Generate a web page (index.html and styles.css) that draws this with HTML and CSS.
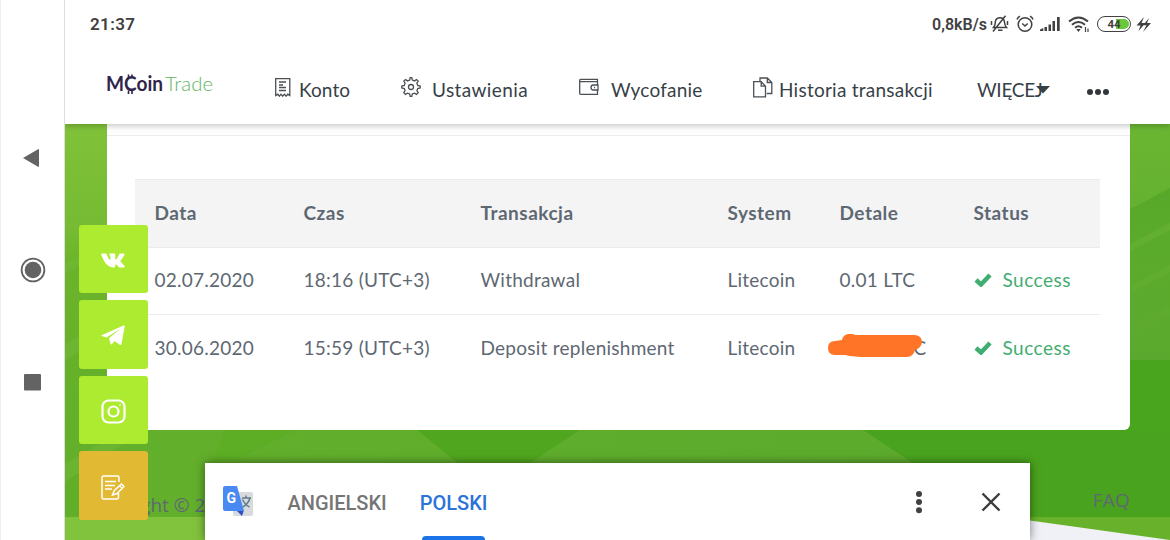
FILE: index.html
```
<!DOCTYPE html>
<html lang="pl">
  <head>
    <meta charset="UTF-8" />
    <title>MCoinTrade</title>
    <link rel="stylesheet" href="styles.css">
  </head>
  <body>
    <div class="system-nav">
      <svg class="back" width="17" height="20" viewBox="0 0 17 20"><path d="M0 10 15.500 1q.5 0 .5 1v16q0 1-.5 1z" /></svg>
      <svg class="home" width="26" height="26" viewBox="0 0 26 26"><circle class="ring" cx="13" cy="13" r="11.400" /><circle cx="13" cy="13" r="8.300" /></svg>
      <svg class="recent" width="17" height="17" viewBox="0 0 17 17"><rect width="17" height="16.500" rx="1" /></svg>
    </div>

    <div class="screen">
      <div class="status-bar">
        <span class="time">21:37</span>
        <div class="indicators">
          <span class="speed">0,8kB/s</span>
          <svg class="line" width="20" height="18" viewBox="0 0 20 18">
            <path d="M3.500 12.500c2-2 1.500-4 2-6.500.5-2 2-3.200 4.500-3.200 3 0 4.300 2 4.500 4.500.2 2.500.5 3.500 2 5.200zM8 15.300h4.500M3 16.500 15.500.8M1.500 6v4M17.500 6v4" />
          </svg>
          <svg class="line" width="18" height="18" viewBox="0 0 18 18">
            <circle cx="9" cy="9.500" r="6.800" /><path d="M1 4.500C1.500 3 2.500 2 4 1.200M17 4.500C16.500 3 15.500 2 14 1.200M6.300 8.500 9 11l2.700-2.500" />
          </svg>
          <svg class="signal" width="20" height="16" viewBox="0 0 20 16">
            <path d="M0 15v-1.500l3.300-1.500v3zM4.500 11h2.500v4H4.500zM8.500 8.500H11V15H8.500zM12.500 5H15v10h-2.500zM17 1h2.700v14H17z" />
          </svg>
          <svg class="wifi" width="22" height="17" viewBox="0 0 22 17">
            <path d="M1 5.500Q10.500-2.500 20 5.500M4 8.700q6.500-5.500 13 0M7 11.700q3.500-3 7 0" /><path class="fill" d="m8.300 13 4.400 0-2.200 3z" /><path class="thin" d="M17.500 11v5M20 12.500v3.500" />
          </svg>
          <div class="battery"><span>44</span></div>
          <svg class="bolt" width="15" height="15" viewBox="0 0 15 15"><path d="M8 0 .5 8.500h4L2.500 14l7-8h-4zM13 1 7 8.200h3.500L7 15l8-9h-4z" /></svg>
        </div>
      </div>

      <div class="navbar">
        <div class="logo">
          <svg width="114" height="34" viewBox="0 0 114 34">
            <text class="coin" x="0" y="22" textLength="57" lengthAdjust="spacingAndGlyphs">MCoin</text>
            <text class="trade" x="59" y="22" textLength="48" lengthAdjust="spacingAndGlyphs">Trade</text>
            <path d="M22.500 5.500v3.500M26 5.500v3.500M22.500 21.500v3.500M26 21.500v3.500" />
          </svg>
        </div>
        <a class="nav-item konto">
          <svg width="16" height="19" viewBox="0 0 16 19"><path d="M.7 17.500V.7h14.100v16.800l-2-1.300-1.700 2-1.700-2-1.700 2-1.700-2-1.700 2-1.500-2zM4 4h7M4 7h4M4 9.500h7M4 12.500h7" /></svg>
          <span>Konto</span>
        </a>
        <a class="nav-item settings">
          <svg width="20" height="20" viewBox="0 0 20 20"><circle cx="10" cy="10" r="2.500" /><path d="m8.700 3 .5-2.300h1.600l.5 2.300 2.200.9 2-1.400 1.700 1.700-1.300 2 .8 2.200 2.500.6v2l-2.500.5-.8 2.200 1.300 2-1.700 1.700-2-1.300-2.200.8-.5 2.500H9.200l-.5-2.500-2.200-.8-2 1.300-1.700-1.700 1.300-2-.8-2.200-2.500-.5V9l2.500-.6.8-2.200-1.300-2 1.700-1.700 2 1.400z" /></svg>
          <span>Ustawienia</span>
        </a>
        <a class="nav-item withdraw">
          <svg width="20" height="18" viewBox="0 0 20 18"><path d="M18.500 7V1.300H1.800Q.7 1.300.7 2.500v13q0 .8 1 .8h16.800v-4M1 3.700h17.300M19 7h-4.500q-2.500 0-2.500 2.500t2.500 2.500H19zM15 9.500h1" /></svg>
          <span>Wycofanie</span>
        </a>
        <a class="nav-item history">
          <svg width="20" height="21" viewBox="0 0 20 21"><path d="M.7 4.700h7.500l4.300 4.500v10.600H.7zM8.200 4.700v4.500h4.300M7 4V1h7.300l4.500 4.500v11h-5M14.300 1v4.500h4.500" /></svg>
          <span>Historia transakcji</span>
        </a>
        <a class="nav-item more">
          <span>WIĘCEJ</span>
          <svg class="caret" width="14" height="8" viewBox="0 0 14 8"><path d="M0 0h14L7 7.500z" /></svg>
        </a>
        <div class="dots"><i></i><i></i><i></i></div>
      </div>

      <div class="content">
        <svg class="backdrop" width="1105" height="416" viewBox="0 0 1105 416">
          <defs>
            <linearGradient id="left" x1="0" y1="0" x2="0" y2="1"><stop offset="0" stop-color="#80c23a" /><stop offset=".26" stop-color="#76bb33" /><stop offset=".36" stop-color="#6bb32a" /><stop offset="1" stop-color="#60ae29" /></linearGradient>
            <linearGradient id="right" x1="0" y1="0" x2="0" y2="1"><stop offset="0" stop-color="#6ab632" /><stop offset="1" stop-color="#5ba82e" /></linearGradient>
            <linearGradient id="bottom" x1="0" y1="0" x2="1" y2="0"><stop offset="0" stop-color="#63b02b" /><stop offset="1" stop-color="#5aa92e" /></linearGradient>
            <linearGradient id="fold" x1="0" y1="0" x2="0" y2="1"><stop offset="0" stop-color="#57a82a" /><stop offset="1" stop-color="#57a82a" stop-opacity="0" /></linearGradient>
          </defs>
          <rect width="1105" height="416" fill="url(#bottom)" />
          <rect width="60" height="393" fill="url(#left)" />
          <path d="M0 140 45 118v8L0 150zM0 220 45 196v14L0 236zM0 340 60 305v14L0 358z" fill="#74b93a" opacity=".5" />
          <path d="M160 306h72l-62 30h-22z" fill="#5aad1f" opacity=".6" />
          <path d="M352 306h163l-50 33h-72z" fill="#51a61f" />
          <path d="M798 306h307v87H930z" fill="#4aa31e" />
          <rect x="1060" width="45" height="240" fill="url(#right)" />
          <path d="M1060 88 1105 64v35l-45 24zM1060 130l45-24v35l-45 24zM1060 172l45-24v35l-45 24zM1060 214l45-24v35l-45 24z" fill="url(#fold)" />
          <path d="M1060 236h45v70h-45z" fill="#4aa51e" />
          <rect y="393" width="500" height="23" fill="#81c33d" />
          <rect x="900" y="393" width="205" height="23" fill="#67b22a" />
          <path d="M900 390 965 396.500 1105 416H900z" fill="#f0f1f7" />
        </svg>

        <div class="card">
          <div class="card-top"></div>
          <table class="transactions">
            <colgroup><col class="c-date"><col class="c-time"><col class="c-type"><col class="c-system"><col class="c-details"><col class="c-status"></colgroup>
            <thead>
              <tr><th>Data</th><th>Czas</th><th>Transakcja</th><th>System</th><th>Detale</th><th>Status</th></tr>
            </thead>
            <tbody>
              <tr>
                <td>02.07.2020</td><td>18:16 (UTC+3)</td><td>Withdrawal</td><td>Litecoin</td><td>0.01 LTC</td>
                <td class="success"><svg width="18" height="14" viewBox="0 0 18 14"><path d="m2 7 5 4.500L16 2" /></svg>Success</td>
              </tr>
              <tr>
                <td>30.06.2020</td><td>15:59 (UTC+3)</td><td>Deposit replenishment</td><td>Litecoin</td>
                <td class="hidden-amount"><span>C</span><svg width="96" height="24" viewBox="0 0 96 24"><path d="M7 7q-7 0-7 7t7 7h10q9 2 22 2h40q6 0 8-7 7-3 7-8 0-6-7-7l-60 0q-3-2-7-1-5 1-6 6z" /></svg></td>
                <td class="success"><svg width="18" height="14" viewBox="0 0 18 14"><path d="m2 7 5 4.500L16 2" /></svg>Success</td>
              </tr>
            </tbody>
          </table>
        </div>

        <div class="footer">
          <span>Copyright © 2</span>
          <a>FAQ</a>
        </div>
      </div>
    </div>

    <div class="social">
      <a><svg width="24" height="15" viewBox="0 0 24 15"><path d="M1.200.5h3.500q.7 0 1 .8c.9 2.500 1.900 4.700 2.900 5.400.5.300.8 0 .8-.8V3.300c0-1-.6-1.200-1.100-1.600-.5-.6 0-1.200.7-1.200h4.300c.7 0 .9.300.9 1v4.300c0 .8.500.9 1 .4 1.200-1.200 2.200-3 2.800-4.700q.4-1 1.400-1h3.200c1 0 1.200.5.8 1.300-.8 1.900-2 3.500-3.600 5.400-.6.800-.5 1 .1 1.700 1.400 1.300 2.700 2.500 3.400 3.800.7 1.200.2 1.800-1 1.800h-3.500c-1.300 0-2.400-2.300-3.700-3-.7-.3-.9.100-.9.800v1.200c0 .8-.4 1-1.300 1C6.800 14.500 3 9.500.3 1.800Q0 .5 1.200.5z" /></svg></a>
      <a><svg width="24" height="21" viewBox="0 0 24 21"><path d="M.7 10.300 22.500.6q1.400-.5 1.200 1L20.500 19q-.4 1.600-1.800.7l-5-3.700-2.900 3.300q-.7.700-1.200-.3L8 13.300 19.500 3.500 5.700 12.400.8 11q-.8-.2-.1-.7z" /></svg></a>
      <a><svg class="stroke insta" width="25" height="25" viewBox="0 0 25 25"><rect x="1.500" y="1.500" width="22" height="22" rx="6" /><circle cx="12.500" cy="12.500" r="5" /><path d="M18.500 5.800h1" /></svg></a>
      <a class="feedback"><svg class="stroke" width="24" height="25" viewBox="0 0 24 25"><path d="M18 7V2.500Q18 1 16.500 1H3Q1 1 1 3v19q0 2 2 2h12.500q2 0 2-2v-4M4 6.500h11M4 10.500h10M4 14h7M11.500 20l1.800-4.500L20.500 9l2.500 2.500-7 7zM18.700 10.700l2.500 2.500" /></svg></a>
    </div>

    <div class="translate-bar">
      <div class="translate-logo">
        <svg width="32" height="32" viewBox="0 0 32 32">
          <rect x="11" y="6" width="20" height="24" rx="2" fill="#d9dadd" />
          <path d="M20 12h9M24 9.500V12M28 12c-1 4-4 7-7 9M20.500 13.500c2 4 4 6 7 7.500" fill="none" stroke="#607d8b" stroke-width="1.500" />
          <path d="m14 24 6 6 2-6z" fill="#3050c0" />
          <path d="M3 0h12l7 25H3q-2 0-2-2V2q0-2 2-2z" fill="#4989f2" />
          <text x="4.500" y="17">G</text>
        </svg>
      </div>
      <span class="lang">ANGIELSKI</span>
      <span class="lang active">POLSKI<i></i></span>
      <svg class="kebab" width="8" height="24" viewBox="0 0 8 24"><circle cx="4" cy="4" r="3" /><circle cx="4" cy="12" r="3" /><circle cx="4" cy="20.300" r="3" /></svg>
      <svg class="close" width="20" height="20" viewBox="0 0 20 20"><path d="m1.500 1.500 17 17M18.500 1.500l-17 17" /></svg>
    </div>
  </body>
</html>
```
FILE: styles.css
```
* {
  box-sizing: border-box;
}

body {
  width: 1170px;
  height: 540px;
  margin: 0;
  display: flex;
  overflow: hidden;
  position: relative;
  background-color: #fff;
  font-family: Lato, sans-serif;
  font-size: 19px;
  color: #5e6873;
}

svg {
  display: block;
  flex: none;
}

.system-nav {
  width: 65px;
  padding-top: 148px;
  border-left: 1px solid #eee;
  border-right: 1px solid #dedede;
  display: flex;
  flex-direction: column;
  align-items: center;
  position: relative;
  z-index: 2;
  background-color: #fff;
  fill: #636363;
}

.system-nav .back {
  margin-right: 3px;
}

.system-nav .home {
  margin: 89px 0 91px;
}

.system-nav .ring {
  fill: none;
  stroke: #636363;
  stroke-width: 1.8;
}

.screen {
  width: 1105px;
}

.status-bar {
  height: 48px;
  padding: 0 19px 0 25px;
  display: flex;
  align-items: center;
  justify-content: space-between;
  position: relative;
  z-index: 2;
  background-color: #fff;
  font-family: Roboto, sans-serif;
  font-weight: 500;
  color: #414141;
}

.time {
  font-size: 17px;
  font-weight: 600;
  letter-spacing: 0.4px;
}

.indicators {
  display: flex;
  align-items: center;
  fill: #414141;
}

.speed {
  font-size: 16px;
  font-weight: 600;
  margin-right: 3px;
}

.indicators .line,
.indicators .wifi {
  fill: none;
  stroke: #414141;
  stroke-width: 1.5;
}

.indicators .line {
  margin-right: 6px;
}

.indicators .wifi {
  margin: 0 7px 0 8px;
  stroke-width: 2;
}

.indicators .wifi .fill {
  fill: #414141;
  stroke: none;
}

.indicators .wifi .thin {
  stroke-width: 1.2;
}

.battery {
  width: 34px;
  height: 16px;
  padding: 1.5px;
  margin-right: 5px;
  border: 1.5px solid #414141;
  border-radius: 8px;
}

.battery span {
  display: block;
  height: 10px;
  border-radius: 6px;
  line-height: 10px;
  text-align: center;
  font-size: 11.5px;
  font-weight: 700;
  background: linear-gradient(90deg, #fff 55%, #68c73a 55%);
}

.navbar {
  height: 76px;
  padding: 2px 0 0 41px;
  display: grid;
  grid-template-columns: 169px 126px 178px 174px 224px 110px 30px;
  align-items: center;
  position: relative;
  z-index: 1;
  background-color: #fff;
  box-shadow: 0 2px 6px rgba(0, 0, 0, 0.22);
}

.logo svg {
  margin-bottom: 2px;
}

.logo text {
  font-size: 20px;
}

.logo .coin {
  font-weight: 700;
  fill: #30244b;
}

.logo .trade {
  font-weight: 300;
  fill: #5fb562;
}

.logo path {
  stroke: #30244b;
  stroke-width: 1.6;
}

.nav-item {
  display: flex;
  align-items: center;
  white-space: nowrap;
  color: #373f47;
}

.nav-item span {
  padding-top: 5px;
}

.nav-item svg {
  fill: none;
  stroke: #4b5055;
  stroke-width: 1.3;
}

.konto span {
  margin-left: 8px;
  letter-spacing: 0.1px;
}

.settings span {
  margin-left: 11px;
  letter-spacing: 0.4px;
}

.withdraw span {
  margin-left: 12px;
  letter-spacing: 0.2px;
}

.history span {
  margin-left: 6px;
  letter-spacing: 0.25px;
}

.more span {
  letter-spacing: -0.3px;
}

.nav-item .caret {
  margin: 5px 0 0 -7px;
  fill: #373f47;
  stroke: none;
}

.dots {
  padding-top: 9px;
  display: flex;
  gap: 2px;
}

.dots i {
  width: 6px;
  height: 6px;
  border-radius: 50%;
  background-color: #32373c;
}

.content {
  height: 416px;
  position: relative;
}

.backdrop {
  position: absolute;
  top: 0;
  left: 0;
}

.card {
  width: 1023px;
  height: 306px;
  margin-left: 41.5px;
  padding: 0 28.5px;
  position: relative;
  background-color: #fff;
  border-radius: 0 0 6px 6px;
}

.card-top {
  height: 12px;
  margin: 0 -28.5px 43px;
  border-bottom: 1px solid #ebecee;
}

.transactions {
  width: 965px;
  table-layout: fixed;
  border-collapse: collapse;
}

.c-date {
  width: 149px;
}

.c-time {
  width: 177px;
}

.c-type {
  width: 247px;
}

.c-system {
  width: 112px;
}

.c-details {
  width: 134px;
}

.c-status {
  width: 146px;
}

.transactions th,
.transactions td {
  height: 67.5px;
  padding: 0 0 2px 19.5px;
  text-align: left;
  white-space: nowrap;
  border-top: 1px solid #ebecee;
  letter-spacing: 0.25px;
}

.transactions th {
  background-color: #f4f4f4;
  font-weight: 700;
  letter-spacing: 0.5px;
}

.transactions .success {
  color: #43ad70;
  letter-spacing: 0.5px;
}

.success svg {
  display: inline-block;
  margin-right: 11px;
  fill: none;
  stroke: #3fae70;
  stroke-width: 4.5;
}

.hidden-amount {
  position: relative;
}

.hidden-amount span {
  margin-left: 74px;
}

.hidden-amount svg {
  position: absolute;
  top: 19px;
  left: 8px;
  fill: #ff7426;
}

.footer {
  position: relative;
  padding: 64px 40px 0 18px;
  display: flex;
  justify-content: space-between;
  font-family: "Open Sans", sans-serif;
  line-height: 22px;
}

.footer a {
  margin-top: -5px;
  letter-spacing: 0.2px;
}

.social {
  position: absolute;
  top: 224.5px;
  left: 79px;
  z-index: 3;
  display: flex;
  flex-direction: column;
  gap: 6.8px;
}

.social a {
  width: 68.5px;
  height: 68.8px;
  padding-top: 3px;
  display: flex;
  align-items: center;
  justify-content: center;
  border-radius: 3px;
  background-color: #adeb31;
  fill: #fff;
}

.social .feedback {
  background-color: #e2b933;
}

.social .stroke {
  fill: none;
  stroke: #fff;
  stroke-width: 1.5;
}

.social .insta {
  stroke-width: 2.2;
}

.translate-bar {
  position: absolute;
  top: 463px;
  left: 205px;
  z-index: 4;
  width: 825px;
  height: 77px;
  padding: 0 29px 0 17px;
  display: flex;
  align-items: center;
  background-color: #fff;
  box-shadow: 0 0 9px rgba(0, 0, 0, 0.5);
  font-family: Roboto, sans-serif;
  font-size: 20px;
  font-weight: 500;
}

.translate-logo {
  width: 65.5px;
}

.translate-logo text {
  font-size: 14px;
  font-weight: 700;
  fill: #fff;
}

.lang {
  margin-right: 33px;
  padding-top: 2px;
  color: #757575;
}

.lang.active {
  height: 77px;
  padding-top: 0;
  display: flex;
  flex-direction: column;
  line-height: 80px;
  color: #2a73d9;
}

.lang.active i {
  width: 63px;
  height: 4px;
  margin: -7px 0 0 2px;
  border-radius: 4px 4px 0 0;
  background-color: #1a73e8;
}

.kebab {
  margin-left: auto;
  fill: #414141;
}

.close {
  margin-left: 58px;
  fill: none;
  stroke: #3b3b3b;
  stroke-width: 2.4;
}
```
